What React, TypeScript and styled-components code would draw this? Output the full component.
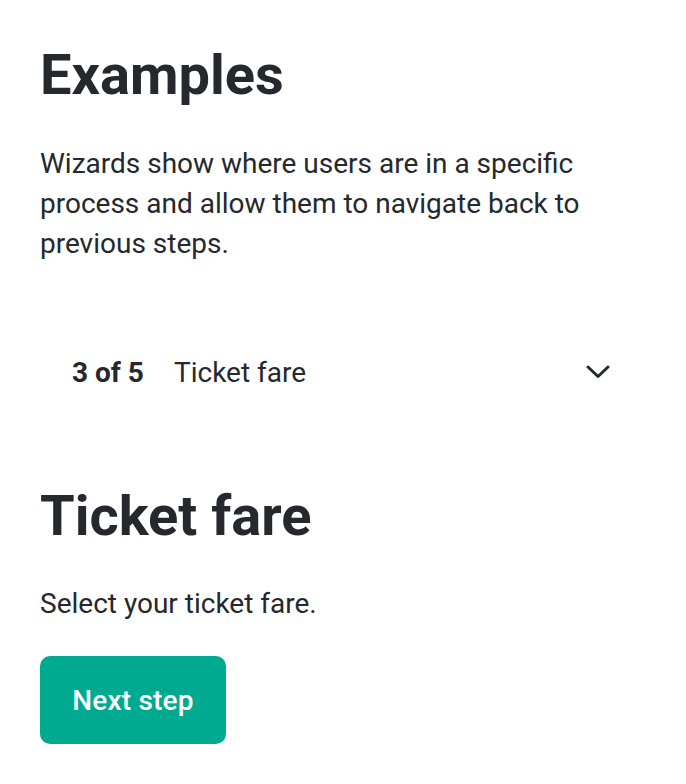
import styled, { createGlobalStyle } from "styled-components";

const GlobalStyle = createGlobalStyle`
  body {
    margin: 0;
    background: #ffffff;
    font-family: Roboto, "Liberation Sans", sans-serif;
    color: #25282d;
  }
`;

const Page = styled.main`
  padding: 42px 40px 40px;
`;

const Heading = styled.h1`
  margin: 0;
  font-size: 56px;
  line-height: 67px;
  font-weight: 700;
`;

const Text = styled.p<{ $gap?: number }>`
  margin: ${(p) => p.$gap ?? 35}px 0 0;
  font-size: 28px;
  line-height: 40px;
`;

const WizardRow = styled.button`
  display: flex;
  align-items: center;
  width: 100%;
  height: 80px;
  margin: 68px 0 71px;
  padding: 0 36px 0 32px;
  border: none;
  background: transparent;
  font-family: inherit;
  color: inherit;
  font-size: 28px;
  text-align: left;
  cursor: pointer;
`;

const StepCount = styled.span`
  font-weight: 700;
  width: 102px;
`;

const StepName = styled.span`
  flex: 1;
`;

const Chevron = () => (
  <svg width="24" height="24" viewBox="0 0 24 24" fill="none">
    <path d="M2 7l10 9.5 10-9.5" stroke="#25282d" strokeWidth="3" strokeLinecap="round" strokeLinejoin="round" />
  </svg>
);

const PrimaryButton = styled.button`
  margin-top: 32px;
  height: 88px;
  padding: 0 32px;
  min-width: 186px;
  border: none;
  border-radius: 10px;
  background: #00aa91;
  color: #ffffff;
  font-family: inherit;
  font-size: 28px;
  font-weight: 500;
  letter-spacing: 0.2px;
  cursor: pointer;
`;

export default function App() {
  return (
    <>
      <GlobalStyle />
      <Page>
        <Heading>Examples</Heading>
        <Text>
          Wizards show where users are in a specific process and allow them to
          navigate back to previous steps.
        </Text>
        <WizardRow>
          <StepCount>3 of 5</StepCount>
          <StepName>Ticket fare</StepName>
          <Chevron />
        </WizardRow>
        <Heading>Ticket fare</Heading>
        <Text $gap={34}>Select your ticket fare.</Text>
        <PrimaryButton>Next step</PrimaryButton>
      </Page>
    </>
  );
}
